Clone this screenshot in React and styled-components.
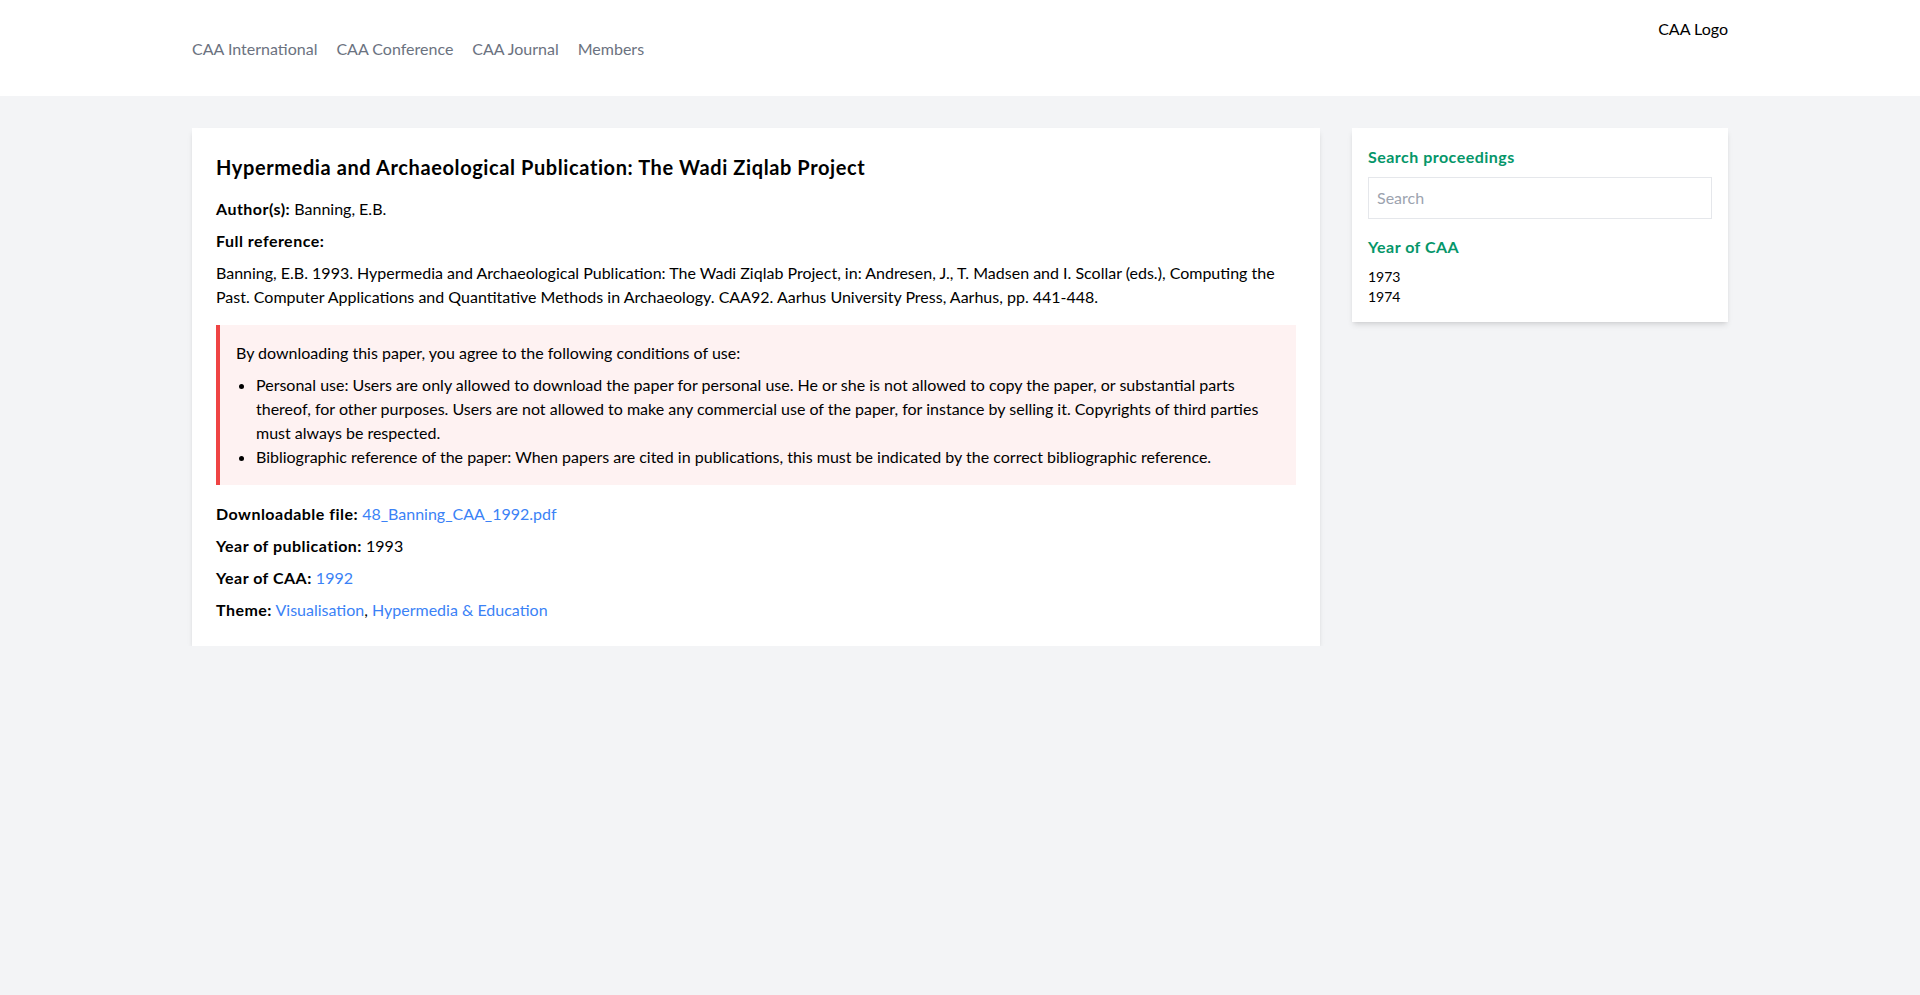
import React from "react";
import styled, { createGlobalStyle } from "styled-components";

const GlobalStyle = createGlobalStyle`
  * { box-sizing: border-box; }
  body {
    margin: 0;
    background: #f3f4f6;
    font-family: Lato, "Noto Sans", "Liberation Sans", sans-serif;
    font-size: 16px;
    line-height: 24px;
    color: #000;
  }
  p, h1, h2, h3, ul { margin: 0; }
`;

const navLinks = ["CAA International", "CAA Conference", "CAA Journal", "Members"];

const App = () => {
  return (
    <>
      <GlobalStyle />
      <Header>
        <HeaderInner>
          <Nav>
            {navLinks.map((l) => (
              <NavLink key={l} href="#">
                {l}
              </NavLink>
            ))}
          </Nav>
          <Logo>CAA Logo</Logo>
        </HeaderInner>
      </Header>
      <Main>
        <Card>
          <Title>Hypermedia and Archaeological Publication: The Wadi Ziqlab Project</Title>
          <Field>
            <Label>Author(s):</Label> Banning, E.B.
          </Field>
          <Field>
            <Label>Full reference:</Label>
          </Field>
          <Reference>
            Banning, E.B. 1993. Hypermedia and Archaeological Publication: The Wadi Ziqlab Project, in: Andresen,
            J., T. Madsen and I. Scollar (eds.), Computing the Past. Computer Applications and Quantitative Methods
            in Archaeology. CAA92. Aarhus University Press, Aarhus, pp. 441-448.
          </Reference>
          <Notice>
            <p>By downloading this paper, you agree to the following conditions of use:</p>
            <NoticeList>
              <li>
                Personal use: Users are only allowed to download the paper for personal use. He or she is not
                allowed to copy the paper, or substantial parts thereof, for other purposes. Users are not allowed to
                make any commercial use of the paper, for instance by selling it. Copyrights of third parties must
                always be respected.
              </li>
              <li>
                Bibliographic reference of the paper: When papers are cited in publications, this must be indicated
                by the correct bibliographic reference.
              </li>
            </NoticeList>
          </Notice>
          <MetaField>
            <Label>Downloadable file:</Label> <TextLink href="#">48_Banning_CAA_1992.pdf</TextLink>
          </MetaField>
          <MetaField>
            <Label>Year of publication:</Label> 1993
          </MetaField>
          <MetaField>
            <Label>Year of CAA:</Label> <TextLink href="#">1992</TextLink>
          </MetaField>
          <MetaField>
            <Label>Theme:</Label> <TextLink href="#">Visualisation</TextLink>,{" "}
            <TextLink href="#">Hypermedia &amp; Education</TextLink>
          </MetaField>
        </Card>
        <Sidebar>
          <SideHeading>Search proceedings</SideHeading>
          <SearchInput placeholder="Search" />
          <SideHeading $spaced>Year of CAA</SideHeading>
          <YearList>
            <li>1973</li>
            <li>1974</li>
          </YearList>
        </Sidebar>
      </Main>
    </>
  );
};
export default App;

const Header = styled.header`
  background: #fff;
  height: 96px;
`;

const HeaderInner = styled.div`
  max-width: 1536px;
  margin: 0 auto;
  height: 100%;
  display: flex;
  justify-content: space-between;
  align-items: flex-start;
`;

const Nav = styled.nav`
  display: flex;
  gap: 19px;
  margin-top: 37px;
`;

const NavLink = styled.a`
  color: #6b7280;
  text-decoration: none;
  font-size: 16px;
`;

const Logo = styled.div`
  margin-top: 17px;
  font-size: 16px;
`;

const Main = styled.main`
  max-width: 1536px;
  margin: 32px auto 0;
  display: grid;
  grid-template-columns: 3fr 1fr;
  gap: 32px;
  align-items: start;
`;

const Card = styled.section`
  background: #fff;
  padding: 25px 24px 24px;
  box-shadow: 0 4px 6px -1px rgba(0, 0, 0, 0.1), 0 2px 4px -2px rgba(0, 0, 0, 0.1);
`;

const Title = styled.h1`
  font-size: 20px;
  line-height: 28px;
  font-weight: 700;
  letter-spacing: 0.03em;
  margin-bottom: 16px;
`;

const Field = styled.p`
  margin-bottom: 8px;
`;

const Label = styled.strong`
  font-weight: 700;
  letter-spacing: 0.03em;
`;

const Reference = styled.p`
  margin-bottom: 16px;
`;

const Notice = styled.div`
  background: #fef2f2;
  border-left: 4px solid #ef4444;
  padding: 16px;
  margin-bottom: 17px;
`;

const NoticeList = styled.ul`
  margin-top: 8px;
  padding-left: 20px;
  list-style: disc;
`;

const MetaField = styled.p`
  margin-bottom: 8px;
  &:last-child { margin-bottom: 0; }
`;

const TextLink = styled.a`
  color: #3b82f6;
  text-decoration: none;
`;

const Sidebar = styled.aside`
  background: #fff;
  padding: 17px 16px 15px;
  box-shadow: 0 4px 6px -1px rgba(0, 0, 0, 0.1), 0 2px 4px -2px rgba(0, 0, 0, 0.1);
`;

const SideHeading = styled.h2`
  font-size: 16px;
  line-height: 24px;
  font-weight: 700;
  letter-spacing: 0.03em;
  color: #059669;
  margin-top: ${(p) => (p.$spaced ? "16px" : "0")};
`;

const SearchInput = styled.input`
  display: block;
  width: 100%;
  margin-top: 8px;
  padding: 8px;
  border: 1px solid #e5e7eb;
  font-family: inherit;
  font-size: 16px;
  line-height: 24px;
  outline: none;
  &::placeholder { color: #9ca3af; }
`;

const YearList = styled.ul`
  list-style: none;
  padding: 0;
  margin-top: 8px;
  font-size: 14px;
  line-height: 20px;
`;
